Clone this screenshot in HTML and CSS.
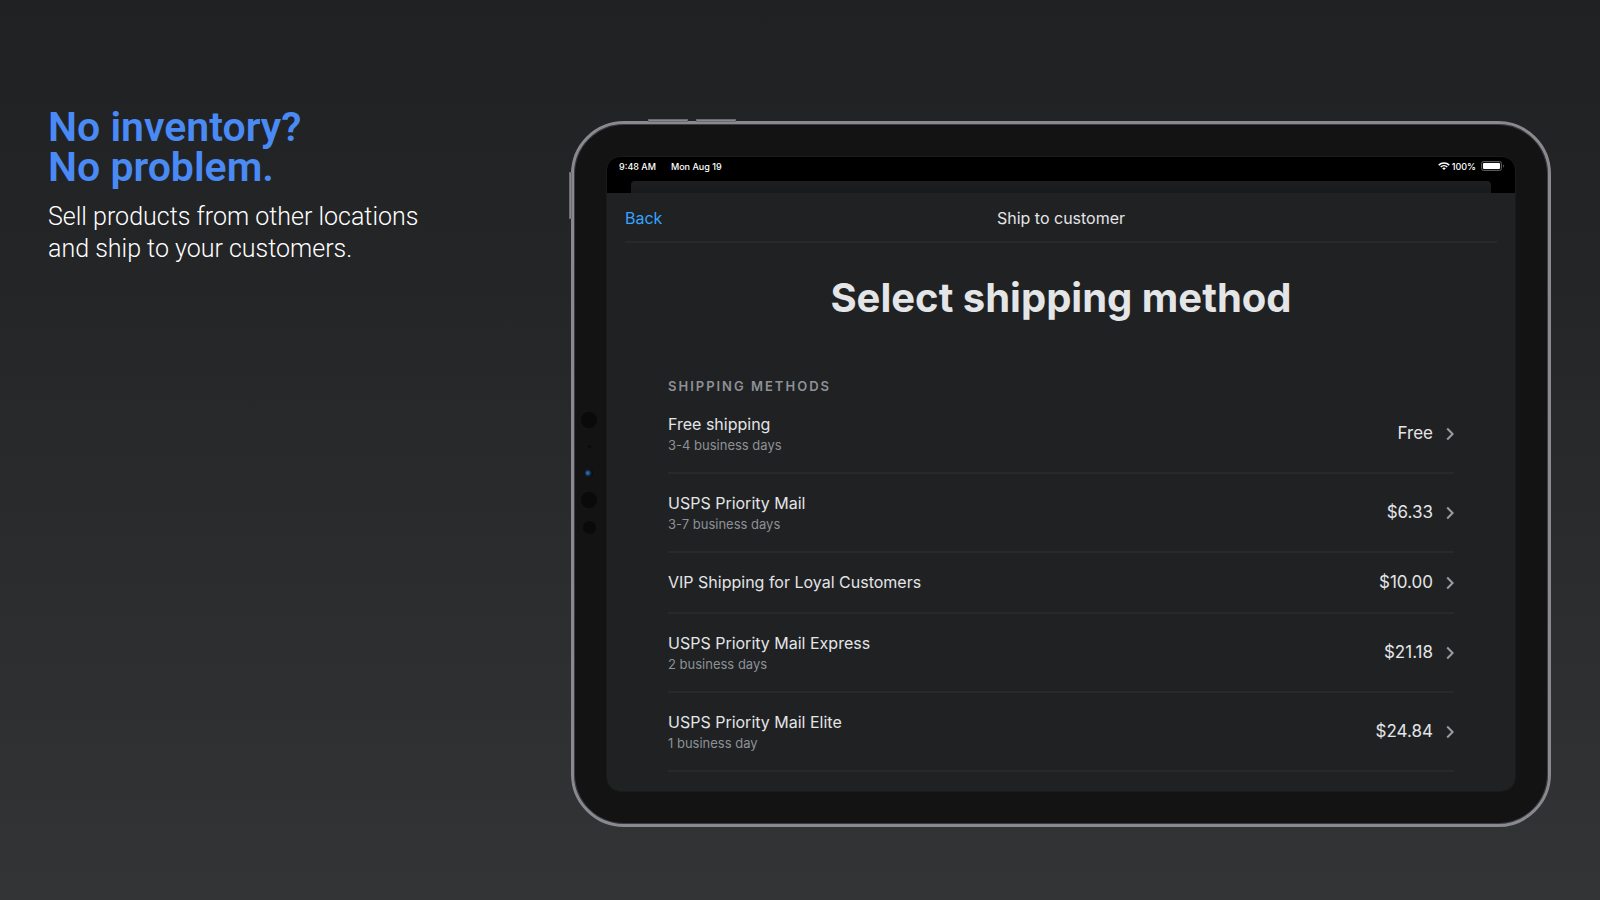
FILE: index.html
```html
<!DOCTYPE html>
<html lang="en">
<head>
  <meta charset="UTF-8" />
  <meta name="viewport" content="width=device-width, initial-scale=1.0"/>
  <title>Ship to customer</title>
  <link rel="stylesheet" href="styles.css">
</head>
<body>
  <section class="pitch">
    <h1>No inventory?<br>No problem.</h1>
    <p>Sell products from other locations<br>and ship to your customers.</p>
  </section>

  <main class="device">
    <span class="key key-up"></span>
    <span class="key key-down"></span>
    <span class="key key-power"></span>
    <div class="sensors">
      <span class="dot"></span>
      <span class="dot dot-tiny"></span>
      <span class="dot dot-lens"></span>
      <span class="dot"></span>
      <span class="dot dot-small"></span>
    </div>

    <div class="screen">
      <div class="status-bar">
        <span>9:48 AM</span>
        <span class="date">Mon Aug 19</span>
        <svg class="wifi" viewBox="0 0 24 16" width="12" height="8">
          <path d="M1.5 6.2a15 15 0 0 1 21 0M5.4 10a9.4 9.4 0 0 1 13.2 0" fill="none" stroke="#fff" stroke-width="3"/>
          <path d="M8.4 12.6a5.2 5.2 0 0 1 7.2 0L12 16z" fill="#fff"/>
        </svg>
        <span>100%</span>
        <svg class="battery" viewBox="0 0 24 10" width="24" height="10">
          <rect x="0.5" y="0.5" width="20" height="9" rx="2" fill="#111" stroke="#58585a"/>
          <rect x="2" y="2" width="17" height="6" rx="1" fill="#fff"/>
          <path d="M22 3.5a1.6 1.6 0 0 1 0 3z" fill="#58585a"/>
        </svg>
      </div>
      <div class="sheet-behind"></div>

      <div class="sheet">
        <header class="nav">
          <a class="back" href="#">Back</a>
          <span class="nav-title">Ship to customer</span>
        </header>
        <h2>Select shipping method</h2>
        <section class="methods">
          <h3>SHIPPING METHODS</h3>
          <button class="method">
            <span class="info">
              <span class="name">Free shipping</span>
              <span class="days">3-4 business days</span>
            </span>
            <span class="price">Free</span>
            <svg class="chevron" viewBox="0 0 8 14" width="8" height="14"><path d="M1.2 1.5 6.6 7l-5.4 5.5"/></svg>
          </button>
          <button class="method">
            <span class="info">
              <span class="name">USPS Priority Mail</span>
              <span class="days">3-7 business days</span>
            </span>
            <span class="price">$6.33</span>
            <svg class="chevron" viewBox="0 0 8 14" width="8" height="14"><path d="M1.2 1.5 6.6 7l-5.4 5.5"/></svg>
          </button>
          <button class="method">
            <span class="info">
              <span class="name">VIP Shipping for Loyal Customers</span>
            </span>
            <span class="price">$10.00</span>
            <svg class="chevron" viewBox="0 0 8 14" width="8" height="14"><path d="M1.2 1.5 6.6 7l-5.4 5.5"/></svg>
          </button>
          <button class="method">
            <span class="info">
              <span class="name">USPS Priority Mail Express</span>
              <span class="days">2 business days</span>
            </span>
            <span class="price">$21.18</span>
            <svg class="chevron" viewBox="0 0 8 14" width="8" height="14"><path d="M1.2 1.5 6.6 7l-5.4 5.5"/></svg>
          </button>
          <button class="method">
            <span class="info">
              <span class="name">USPS Priority Mail Elite</span>
              <span class="days">1 business day</span>
            </span>
            <span class="price">$24.84</span>
            <svg class="chevron" viewBox="0 0 8 14" width="8" height="14"><path d="M1.2 1.5 6.6 7l-5.4 5.5"/></svg>
          </button>
        </section>
      </div>
    </div>
  </main>
</body>
</html>
```
FILE: styles.css
```css
* {
  box-sizing: border-box;
}
body {
  margin: 0;
  min-height: 100vh;
  padding: 0 49px 0 48px;
  display: flex;
  align-items: flex-start;
  font-family: Inter, "Liberation Sans", sans-serif;
  color: #e3e5e7;
  background: linear-gradient(#202123, #242527 30%, #333436);
}
h1, h2, h3, p {
  margin: 0;
}

/* left text */
.pitch {
  flex: 0 0 523px;
  padding-top: 107px;
  font-family: Roboto, sans-serif;
}
.pitch h1 {
  font-size: 41px;
  line-height: 40px;
  font-weight: 600;
  color: #4a8af4;
}
.pitch p {
  margin-top: 14px;
  font-size: 25px;
  line-height: 32px;
  font-weight: 300;
  color: #fff;
}

/* tablet */
.device {
  position: relative;
  flex: 1;
  min-width: 0;
  margin: 121px 0 72px;
  padding: 32px;
  border: 3px solid #8a8990;
  border-radius: 53px;
  background: #131313;
  box-shadow: inset 0 0 0 1px #3c3c40;
}
.key {
  position: absolute;
  background: #8a8990;
  border: 1px solid #6c6c70;
}
.key-up,
.key-down {
  top: -5px;
  width: 40px;
  height: 3px;
}
.key-up {
  left: 74px;
}
.key-down {
  left: 122px;
}
.key-power {
  left: -5px;
  top: 48px;
  width: 3px;
  height: 47px;
}
.sensors {
  position: absolute;
  left: 7px;
  top: 288px;
  width: 16px;
  display: flex;
  flex-direction: column;
  align-items: center;
  gap: 15px;
}
.dot {
  width: 16px;
  height: 16px;
  border-radius: 50%;
  background: #0a0a0a;
}
.dot-tiny {
  width: 3px;
  height: 3px;
  margin: 2px 0;
}
.dot-lens {
  width: 8px;
  height: 8px;
  margin: 4px 0 0;
  background: radial-gradient(circle at 35% 50%, #2a66a8 15%, #10233c 45%, #0a0a0c 75%);
}
.dot-small {
  width: 13px;
  height: 13px;
  margin-top: -2px;
}

.screen {
  border: 1px solid #1a1b1c;
  border-radius: 14px;
  overflow: hidden;
  background: #000;
}
.status-bar {
  display: flex;
  align-items: center;
  height: 24px;
  padding: 0 10px 6px 12px;
  font-size: 9px;
  font-weight: 500;
  color: #fff;
}
.date {
  margin: 0 auto 0 15px;
}
.wifi {
  margin-right: 2px;
}
.battery {
  margin-left: 5px;
}
.sheet-behind {
  height: 12px;
  margin: 0 24px;
  border-radius: 4px 4px 0 0;
  background: linear-gradient(#1d1e1f, #191a1b);
}
.sheet {
  height: 598px;
  background: #202123;
}
.nav {
  position: relative;
  display: flex;
  justify-content: center;
  align-items: center;
  height: 50px;
  margin: 0 18px;
  padding-top: 2px;
  border-bottom: 2px solid #28292b;
  font-size: 16px;
}
.back {
  position: absolute;
  left: 0;
  color: #36a3ff;
  text-decoration: none;
}
.sheet h2 {
  margin-top: 30px;
  font-size: 40px;
  line-height: 50px;
  font-weight: 700;
  text-align: center;
}
.methods {
  padding: 0 61px;
}
.methods h3 {
  margin-top: 55px;
  padding-bottom: 1px;
  font-size: 13px;
  line-height: 16px;
  font-weight: 600;
  letter-spacing: 2px;
  color: #8c9196;
}
.method {
  display: flex;
  align-items: center;
  width: 100%;
  padding: 18px 0;
  border: none;
  border-bottom: 2px solid #28292b;
  background: none;
  font: inherit;
  font-size: 16px;
  line-height: 23px;
  color: inherit;
  text-align: left;
  cursor: pointer;
}
.info {
  flex: 1;
}
.name {
  display: block;
}
.days {
  display: block;
  font-size: 13px;
  line-height: 18px;
  color: #8c9196;
}
.price {
  margin-right: 13px;
  font-size: 17px;
}
.chevron path {
  fill: none;
  stroke: #9a9ca0;
  stroke-width: 2;
}

@media (max-width: 1200px) {
  body {
    flex-direction: column;
    align-items: stretch;
  }
  .pitch {
    flex: none;
  }
}
```
